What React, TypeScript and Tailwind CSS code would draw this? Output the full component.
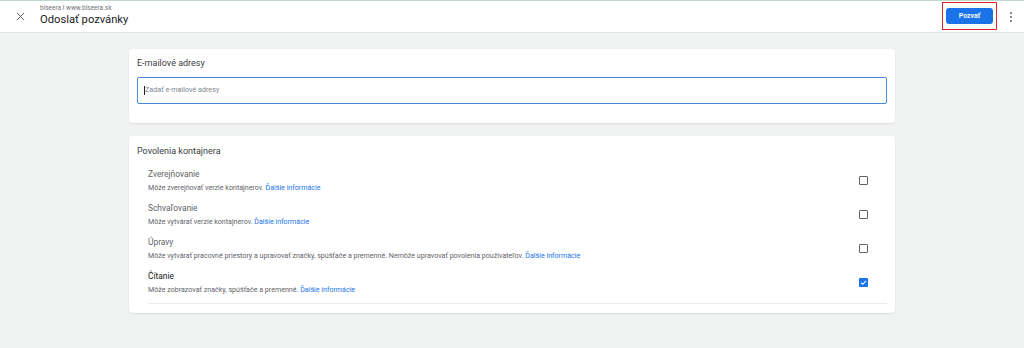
import React from "react";

const items = [
  { title: "Zverejňovanie", desc: "Môže zverejňovať verzie kontajnerov.", checked: false, dark: false },
  { title: "Schvaľovanie", desc: "Môže vytvárať verzie kontajnerov.", checked: false, dark: false },
  {
    title: "Úpravy",
    desc: "Môže vytvárať pracovné priestory a upravovať značky, spúšťače a premenné. Nemôže upravovať povolenia používateľov.",
    checked: false,
    dark: false,
  },
  { title: "Čítanie", desc: "Môže zobrazovať značky, spúšťače a premenné.", checked: true, dark: true },
];

function Checkbox({ checked }: { checked: boolean }) {
  if (checked) {
    return (
      <div className="w-[9px] h-[9px] rounded-[1px] bg-[#1a73e8] flex items-center justify-center">
        <svg width="7" height="7" viewBox="0 0 10 10">
          <path d="M1.5 5.2 L4 7.5 L8.6 2.6" fill="none" stroke="white" strokeWidth="1.5" />
        </svg>
      </div>
    );
  }
  return <div className="w-[9px] h-[9px] rounded-[1px] border-[1.5px] border-[#5f6368]" />;
}

export default function App() {
  return (
    <div
      className="w-[1024px] h-[348px] bg-[#f1f3f2] flex flex-col"
      style={{ fontFamily: "Roboto, 'Liberation Sans', sans-serif" }}
    >
      <header className="h-[33px] shrink-0 bg-white border-t border-t-[#bcd9cd] border-b border-b-[#e3e5e4] flex items-center">
        <div className="w-[40px] flex justify-center">
          <svg width="9" height="9" viewBox="0 0 10 10">
            <path d="M1 1 L9 9 M9 1 L1 9" stroke="#5f6368" strokeWidth="1.1" />
          </svg>
        </div>
        <div className="flex flex-col">
          <div className="text-[6.5px] leading-[8px] text-[#70757a] mt-[-2px]">blseera I www.blseera.sk</div>
          <div className="text-[11.2px] leading-[15px] text-[#202124]">Odoslať pozvánky</div>
        </div>
        <div className="ml-auto flex items-center">
          <div className="w-[55px] h-[28px] border-[1.5px] border-[#e0282b] flex items-center justify-center mt-[-1px]">
            <div className="w-[47px] h-[16px] rounded-[3px] bg-[#1a73e8] text-white text-[7px] font-semibold flex items-center justify-center">
              Pozvať
            </div>
          </div>
          <div className="w-[27px] flex flex-col items-center gap-[2px]">
            <div className="w-[2px] h-[2px] rounded-full bg-[#5f6368]" />
            <div className="w-[2px] h-[2px] rounded-full bg-[#5f6368]" />
            <div className="w-[2px] h-[2px] rounded-full bg-[#5f6368]" />
          </div>
        </div>
      </header>

      <main className="flex flex-col items-center pt-[16px] gap-[13px]">
        <section className="w-[766px] bg-white rounded-[4px] shadow-[0_1px_2px_rgba(60,64,67,0.12)] px-[8px] pt-[7px] pb-[19px]">
          <div className="text-[9px] leading-[14px] text-[#3c4043]">E-mailové adresy</div>
          <div className="mt-[7px] h-[27px] rounded-[2px] border-[1.5px] border-[#4a86d6] flex items-center pl-[6px]">
            <div className="w-[1px] h-[9px] bg-[#202124]" />
            <span className="text-[7.2px] text-[#80868b]">Zadať e-mailové adresy</span>
          </div>
        </section>

        <section className="w-[766px] bg-white rounded-[4px] shadow-[0_1px_2px_rgba(60,64,67,0.12)] px-[8px] pt-[8px] pb-[9px]">
          <div className="text-[9px] leading-[14px] text-[#3c4043]">Povolenia kontajnera</div>
          <div className="ml-[11px] mt-[5px]">
            {items.map((it) => (
              <div key={it.title} className="h-[34px] flex items-center">
                <div className="flex flex-col flex-1">
                  <div className={`text-[8.4px] leading-[14px] ${it.dark ? "text-[#202124]" : "text-[#5f6368]"}`}>
                    {it.title}
                  </div>
                  <div className="text-[7.1px] leading-[12px] mt-[1px] text-[#5f6368]">
                    {it.desc} <span className="text-[#1a73e8]">Ďalšie informácie</span>
                  </div>
                </div>
                <div className="w-[28px] flex justify-start">
                  <Checkbox checked={it.checked} />
                </div>
              </div>
            ))}
            <div className="mt-[4px] border-t border-[#e8eaed]" />
          </div>
        </section>
      </main>
    </div>
  );
}
